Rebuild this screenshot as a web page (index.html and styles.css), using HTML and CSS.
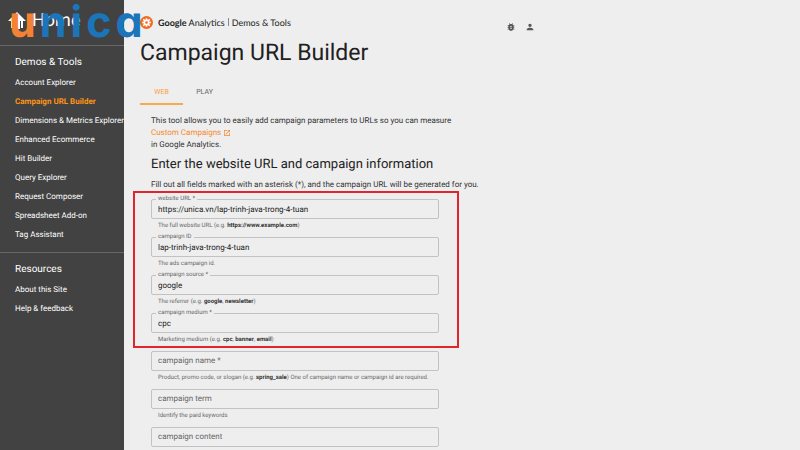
FILE: index.html
```
<!DOCTYPE html>
<html lang="en">
<head>
    <meta charset="UTF-8">
    <meta name="viewport" content="width=device-width, initial-scale=1.0">
    <title>Campaign URL Builder</title>
    <link rel="stylesheet" href="styles.css">
</head>
<body>
    <div class="watermark"><span class="orange">u</span><span>n</span><span>i</span><span>c</span><span>a</span></div>

    <nav class="sidebar">
        <a class="home" href="#">
            <svg viewBox="0 0 18 17" aria-hidden="true"><path d="M9 0L0 9h3v7h3V9h1v8h5V9h1v7h2V9h3z"/></svg>
            Home
        </a>
        <div class="nav-group">
            <h2>Demos &amp; Tools</h2>
            <a href="#">Account Explorer</a>
            <a class="active" href="#">Campaign URL Builder</a>
            <a href="#">Dimensions &amp; Metrics Explorer</a>
            <a href="#">Enhanced Ecommerce</a>
            <a href="#">Hit Builder</a>
            <a href="#">Query Explorer</a>
            <a href="#">Request Composer</a>
            <a href="#">Spreadsheet Add-on</a>
            <a href="#">Tag Assistant</a>
        </div>
        <div class="nav-group">
            <h2>Resources</h2>
            <a href="#">About this Site</a>
            <a href="#">Help &amp; feedback</a>
        </div>
    </nav>

    <main class="main">
        <header class="topbar">
            <div class="brand">
                <svg class="brand-logo" viewBox="0 0 24 24" aria-hidden="true">
                    <circle cx="12" cy="12" r="12" fill="#f26a21"/>
                    <path d="M12 4v4M12 16v4M4 12h4M16 12h4M6 6l3 3M15 15l3 3M18 6l-3 3M9 15l-3 3" stroke="#fff" stroke-width="3"/>
                    <circle cx="12" cy="12" r="4" fill="none" stroke="#fff" stroke-width="3"/>
                </svg>
                <span><b>Google</b> Analytics</span>
                <span class="bar"></span>
                <span>Demos &amp; Tools</span>
            </div>
            <div class="actions">
                <button type="button" aria-label="Report a bug">
                    <svg viewBox="0 0 24 24"><path d="M20 8h-2.81c-.45-.78-1.07-1.45-1.82-1.96L17 4.41 15.59 3l-2.17 2.17C12.96 5.06 12.49 5 12 5s-.96.06-1.41.17L8.41 3 7 4.41l1.62 1.63C7.88 6.55 7.26 7.22 6.81 8H4v2h2.09c-.05.33-.09.66-.09 1v1H4v2h2v1c0 .34.04.67.09 1H4v2h2.81c1.04 1.79 2.97 3 5.19 3s4.15-1.21 5.19-3H20v-2h-2.09c.05-.33.09-.66.09-1v-1h2v-2h-2v-1c0-.34-.04-.67-.09-1H20V8zm-6 8h-4v-2h4v2zm0-4h-4v-2h4v2z"/></svg>
                </button>
                <button type="button" aria-label="Account">
                    <svg viewBox="0 0 24 24"><path d="M12 12c2.21 0 4-1.79 4-4s-1.79-4-4-4-4 1.79-4 4 1.79 4 4 4zm0 2c-2.67 0-8 1.34-8 4v2h16v-2c0-2.66-5.33-4-8-4z"/></svg>
                </button>
            </div>
        </header>

        <h1>Campaign URL Builder</h1>

        <div class="tabs">
            <button type="button" class="tab selected">WEB</button>
            <button type="button" class="tab">PLAY</button>
        </div>

        <div class="content">
            <p class="intro">
                This tool allows you to easily add campaign parameters to URLs so you can measure<br>
                <a href="#">Custom Campaigns
                    <svg viewBox="0 0 24 24" aria-hidden="true"><path d="M19 19H5V5h7V3H3v18h18v-9h-2v7zM14 3v2h3.59l-9.83 9.83 1.41 1.41L19 6.41V10h2V3h-7z"/></svg></a><br>
                in Google Analytics.
            </p>
            <h2>Enter the website URL and campaign information</h2>
            <p class="hint">Fill out all fields marked with an asterisk (*), and the campaign URL will be generated for you.</p>

            <form>
                <div class="fields highlight">
                    <div class="field filled">
                        <label for="url">website URL *</label>
                        <input type="text" id="url" value="https://unica.vn/lap-trinh-java-trong-4-tuan">
                        <p>The full website URL (e.g. <b>https://www.example.com</b>)</p>
                    </div>
                    <div class="field filled">
                        <label for="campaign-id">campaign ID</label>
                        <input type="text" id="campaign-id" value="lap-trinh-java-trong-4-tuan">
                        <p>The ads campaign id.</p>
                    </div>
                    <div class="field filled">
                        <label for="source">campaign source *</label>
                        <input type="text" id="source" value="google">
                        <p>The referrer (e.g. <b>google</b>, <b>newsletter</b>)</p>
                    </div>
                    <div class="field filled">
                        <label for="medium">campaign medium *</label>
                        <input type="text" id="medium" value="cpc">
                        <p>Marketing medium (e.g. <b>cpc</b>, <b>banner</b>, <b>email</b>)</p>
                    </div>
                </div>
                <div class="fields">
                    <div class="field">
                        <label for="name">campaign name *</label>
                        <input type="text" id="name">
                        <p>Product, promo code, or slogan (e.g. <b>spring_sale</b>) One of campaign name or campaign id are required.</p>
                    </div>
                    <div class="field">
                        <label for="term">campaign term</label>
                        <input type="text" id="term">
                        <p>Identify the paid keywords</p>
                    </div>
                    <div class="field">
                        <label for="content">campaign content</label>
                        <input type="text" id="content">
                    </div>
                </div>
            </form>
        </div>
    </main>
</body>
</html>
```

FILE: styles.css
```
* {
    box-sizing: border-box;
}
body {
    margin: 0;
    display: flex;
    min-height: 100vh;
    font-family: Roboto, Arial, sans-serif;
    font-size: 8px;
    text-rendering: geometricPrecision;
    color: #333;
    background: #eee;
}
h1, h2, p {
    margin: 0;
    font-weight: 400;
}
a {
    text-decoration: none;
}
button {
    padding: 0;
    border: none;
    background: none;
    font-family: inherit;
    cursor: pointer;
}

/* logo laid over the page */
.watermark {
    position: absolute;
    top: 0;
    left: 9px;
    display: flex;
    gap: 4px;
    font-family: Inter, sans-serif;
    font-feature-settings: "cv11";
    font-size: 43px;
    font-weight: 700;
    line-height: 44px;
    color: #1b75bb;
    pointer-events: none;
}
.watermark .orange {
    color: #f58232;
}

/* sidebar */
.sidebar {
    flex: 0 0 124px;
    background: #424242;
}
.sidebar a {
    display: block;
    line-height: 19px;
    color: #fff;
    white-space: nowrap;
}
.sidebar .home {
    display: flex;
    align-items: center;
    gap: 6px;
    height: 45px;
    padding: 0 8px 4px;
    font-size: 18px;
}
.home svg {
    width: 18px;
    height: 17px;
    fill: #fff;
}
.nav-group {
    padding: 6px 0 8px 15px;
    border-top: 1px solid #686868;
}
.nav-group h2 {
    font-size: 10px;
    line-height: 21px;
    color: #fff;
}
.sidebar .active {
    font-weight: 700;
    color: #ff9414;
}

/* main column */
.main {
    flex: 1;
    padding: 14px 16px 0;
}
.topbar {
    display: flex;
    justify-content: space-between;
    max-width: 395px;
    height: 22px;
}
.brand {
    display: flex;
    align-items: center;
    gap: 3px;
    height: 16px;
    font-family: Lato, sans-serif;
    font-size: 9px;
    color: #222;
}
.brand-logo {
    width: 13px;
    height: 13px;
    margin-right: 2px;
}
.bar {
    width: 1px;
    height: 8px;
    background: #888;
}
.actions {
    display: flex;
    gap: 9px;
    padding-top: 3px;
}
.actions svg {
    display: block;
    width: 10px;
    height: 10px;
    fill: #555;
}
h1 {
    font-size: 23px;
    line-height: 34px;
    color: #212121;
}
.tabs {
    display: flex;
    margin-top: 11px;
}
.tab {
    width: 43px;
    height: 24px;
    border-bottom: 2px solid transparent;
    font-size: 7px;
    color: #666;
}
.tab.selected {
    border-color: #f9ab4c;
    color: #f9a13a;
}
.content {
    max-width: 320px;
    padding: 10px 0 0 11px;
    white-space: nowrap;
}
.intro {
    line-height: 12px;
}
.intro a {
    color: #f58a2c;
}
.intro svg {
    width: 8px;
    height: 8px;
    vertical-align: -2px;
    fill: #f58a2c;
}
.content h2 {
    margin-top: 3px;
    font-size: 13px;
    line-height: 22px;
    color: #212121;
}
.hint {
    margin-top: 3px;
    line-height: 12px;
}

/* form */
form {
    width: 288px;
}
.fields {
    display: flex;
    flex-direction: column;
    gap: 5px;
}
.highlight {
    margin: 0 -20px 3px -18px;
    padding: 6px 18px 0 16px;
    border: 2px solid #e0262c;
}
.field {
    position: relative;
    height: 33px;
}
.field input {
    display: block;
    width: 100%;
    height: 20px;
    padding: 0 6px;
    border: 1px solid #c2c2c2;
    border-radius: 2px;
    background: transparent;
    font-family: inherit;
    font-size: 8px;
    text-rendering: inherit;
    color: #222;
}
.field label {
    position: absolute;
    top: 0;
    left: 7px;
    line-height: 20px;
    color: #666;
}
.filled label {
    top: -4px;
    left: 5px;
    padding: 0 2px;
    background: #eee;
    font-size: 6px;
    line-height: 8px;
}
.field p {
    padding: 2px 7px 0;
    font-size: 6px;
    line-height: 10px;
    color: #666;
}
.field b {
    color: #333;
}
```
